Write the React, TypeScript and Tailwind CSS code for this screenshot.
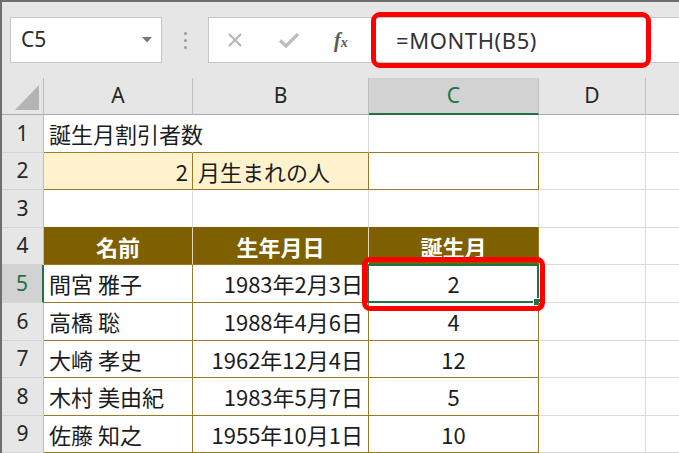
import type { ReactNode } from "react";

const cjk = "font-['Noto_Sans_CJK_JP',sans-serif]";
const ui = "font-['Noto_Sans',sans-serif]";

function Cell({ className = "", children }: { className?: string; children?: ReactNode }) {
  return <div className={`relative flex items-center border-r border-b text-[22px] text-[#1c1c1c] ${cjk} ${className}`}>{children}</div>;
}

function RowHead({ n, active = false }: { n: string; active?: boolean }) {
  return (
    <div
      className={`flex items-center justify-center border-b border-b-[#d4d4d4] text-[21px] ${ui} ${
        active
          ? "bg-[#d2d2d2] text-[#217346] border-r-2 border-r-[#217346]"
          : "bg-[#e6e6e6] text-[#262626] border-r border-r-[#bdbdbd]"
      }`}
    >
      {n}
    </div>
  );
}

function ColHead({ label, active = false, last = false }: { label: string; active?: boolean; last?: boolean }) {
  return (
    <div
      className={`flex items-center justify-center text-[21px] ${ui} ${last ? "" : "border-r border-r-[#c0c0c0]"} ${
        active ? "bg-[#d2d2d2] text-[#217346] border-b-2 border-b-[#217346]" : "bg-[#e6e6e6] text-[#262626] border-b border-b-[#ababab]"
      }`}
    >
      {label}
    </div>
  );
}

const people = [
  { name: "間宮 雅子", date: "1983年2月3日", month: "2" },
  { name: "高橋 聡", date: "1988年4月6日", month: "4" },
  { name: "大崎 孝史", date: "1962年12月4日", month: "12" },
  { name: "木村 美由紀", date: "1983年5月7日", month: "5" },
  { name: "佐藤 知之", date: "1955年10月1日", month: "10" },
];

export default function App() {
  return (
    <div className="relative w-[679px] h-[453px] overflow-hidden bg-[#e6e6e6] border-t-2 border-l-2 border-[#6e6e6e]">
      {/* formula bar */}
      <div className="flex h-[76px] items-start pt-[15px] pl-[8px]">
        <div className="flex h-[46px] w-[152px] items-center justify-between border border-[#c6c6c6] bg-white pl-[10px] pr-[9px]">
          <span className={`text-[21px] text-[#2b2b2b] ${ui}`}>C5</span>
          <svg width="10" height="6" viewBox="0 0 10 6">
            <polygon points="0,0 10,0 5,5.5" fill="#777" />
          </svg>
        </div>
        <div className="flex h-[46px] w-[46px] flex-col items-center justify-center gap-[4px]">
          <span className="h-[3px] w-[3px] rounded-full bg-[#9a9a9a]" />
          <span className="h-[3px] w-[3px] rounded-full bg-[#9a9a9a]" />
          <span className="h-[3px] w-[3px] rounded-full bg-[#9a9a9a]" />
        </div>
        <div className="flex h-[46px] flex-1 items-center border border-r-0 border-[#c6c6c6] bg-white">
          <svg className="ml-[18px]" width="16" height="16" viewBox="0 0 16 16">
            <path d="M2 2 L14 14 M14 2 L2 14" stroke="#b3b3b3" strokeWidth="2" />
          </svg>
          <svg className="ml-[35px]" width="22" height="18" viewBox="0 0 22 18">
            <path d="M2 9.5 L8 15 L20 3" stroke="#bdbdbd" strokeWidth="3.2" fill="none" />
          </svg>
          <span className="ml-[34px] w-[20px] font-['Liberation_Serif',serif] text-[20px] font-bold italic leading-none text-[#5a5a5a]">
            f<span className="text-[14px]">x</span>
          </span>
          <span className={`ml-[42px] text-[22px] tracking-[0.6px] text-[#333] ${ui}`}>=MONTH(B5)</span>
        </div>
      </div>

      {/* sheet */}
      <div className="grid grid-cols-[42px_149px_176px_170px_107px_1fr] grid-rows-[37px_38px_37px_38px_37px_38px_38px_37px_38px_37px] bg-white">
        <div className="flex items-end justify-end border-r border-b border-r-[#bdbdbd] border-b-[#ababab] bg-[#e6e6e6] pr-[4px] pb-[4px]">
          <svg width="24" height="25" viewBox="0 0 24 25">
            <polygon points="24,0 24,25 0,25" fill="#b4b4b4" />
          </svg>
        </div>
        <ColHead label="A" />
        <ColHead label="B" />
        <ColHead label="C" active />
        <ColHead label="D" />
        <ColHead label="" last />

        {/* row 1 */}
        <RowHead n="1" />
        <Cell className="z-10 overflow-visible whitespace-nowrap border-r-white border-b-[#9a7a26] pl-[5px]">誕生月割引者数</Cell>
        <Cell className="border-r-[#dadada] border-b-[#9a7a26]" />
        <Cell className="border-r-[#dadada] border-b-[#9a7a26]" />
        <Cell className="border-r-[#dadada] border-b-[#dadada]" />
        <Cell className="border-r-0 border-b-[#dadada]" />

        {/* row 2 */}
        <RowHead n="2" />
        <Cell className="justify-end border-r-[#9a7a26] border-b-[#9a7a26] bg-[#fff2cc] pr-[4px]">2</Cell>
        <Cell className="border-r-[#9a7a26] border-b-[#9a7a26] bg-[#fff2cc] pl-[5px]">月生まれの人</Cell>
        <Cell className="border-r-[#9a7a26] border-b-[#9a7a26]" />
        <Cell className="border-r-[#dadada] border-b-[#dadada]" />
        <Cell className="border-r-0 border-b-[#dadada]" />

        {/* row 3 */}
        <RowHead n="3" />
        <Cell className="border-r-[#dadada] border-b-[#7f6000]" />
        <Cell className="border-r-[#dadada] border-b-[#7f6000]" />
        <Cell className="border-r-[#dadada] border-b-[#7f6000]" />
        <Cell className="border-r-[#dadada] border-b-[#dadada]" />
        <Cell className="border-r-0 border-b-[#dadada]" />

        {/* row 4 */}
        <RowHead n="4" />
        <Cell className="justify-center border-r-[#e6dab8] border-b-[#9a7a26] bg-[#7f6000] font-bold text-white">名前</Cell>
        <Cell className="justify-center border-r-[#e6dab8] border-b-[#9a7a26] bg-[#7f6000] font-bold text-white">生年月日</Cell>
        <Cell className="justify-center border-r-[#9a7a26] border-b-[#9a7a26] bg-[#7f6000] font-bold text-white">誕生月</Cell>
        <Cell className="border-r-[#dadada] border-b-[#dadada]" />
        <Cell className="border-r-0 border-b-[#dadada]" />

        {people.map((p, i) => (
          <div key={p.name} className="contents">
            <RowHead n={String(i + 5)} active={i === 0} />
            <Cell className="whitespace-nowrap border-r-[#9a7a26] border-b-[#9a7a26] pl-[5px]">{p.name}</Cell>
            <Cell className="justify-end whitespace-nowrap border-r-[#9a7a26] border-b-[#9a7a26] pr-[5px]">{p.date}</Cell>
            <Cell className="justify-center border-r-[#9a7a26] border-b-[#9a7a26]">
              {p.month}
              {i === 0 && (
                <>
                  <span className="absolute -left-[2px] -top-[1px] -right-[1px] -bottom-[1px] border-2 border-[#217346]" />
                  <span className="absolute -right-[2px] -bottom-[3px] h-[7px] w-[7px] border-l border-t border-white bg-[#217346]" />
                </>
              )}
            </Cell>
            <Cell className="border-r-[#dadada] border-b-[#dadada]" />
            <Cell className="border-r-0 border-b-[#dadada]" />
          </div>
        ))}
      </div>

      {/* annotations */}
      <div className="pointer-events-none absolute left-[369px] top-[10px] h-[56px] w-[280px] rounded-[9px] border-[5px] border-[#ff0000]" />
      <div className="pointer-events-none absolute left-[360px] top-[255px] h-[54px] w-[183px] rounded-[8px] border-[5px] border-[#ff0000]" />
    </div>
  );
}
